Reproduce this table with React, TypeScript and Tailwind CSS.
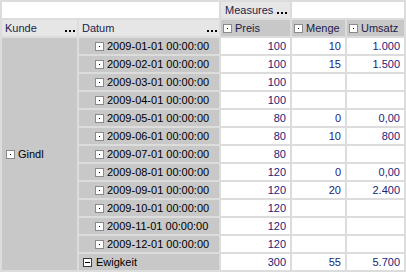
type Row = { datum: string; preis: string; menge: string; umsatz: string };

const rows: Row[] = [
  { datum: "2009-01-01 00:00:00", preis: "100", menge: "10", umsatz: "1.000" },
  { datum: "2009-02-01 00:00:00", preis: "100", menge: "15", umsatz: "1.500" },
  { datum: "2009-03-01 00:00:00", preis: "100", menge: "", umsatz: "" },
  { datum: "2009-04-01 00:00:00", preis: "100", menge: "", umsatz: "" },
  { datum: "2009-05-01 00:00:00", preis: "80", menge: "0", umsatz: "0,00" },
  { datum: "2009-06-01 00:00:00", preis: "80", menge: "10", umsatz: "800" },
  { datum: "2009-07-01 00:00:00", preis: "80", menge: "", umsatz: "" },
  { datum: "2009-08-01 00:00:00", preis: "120", menge: "0", umsatz: "0,00" },
  { datum: "2009-09-01 00:00:00", preis: "120", menge: "20", umsatz: "2.400" },
  { datum: "2009-10-01 00:00:00", preis: "120", menge: "", umsatz: "" },
  { datum: "2009-11-01 00:00:00", preis: "120", menge: "", umsatz: "" },
  { datum: "2009-12-01 00:00:00", preis: "120", menge: "", umsatz: "" },
];

function DotBox() {
  return (
    <span className="inline-flex w-[9px] h-[9px] border border-[#8a8a8a] bg-white items-center justify-center shrink-0">
      <span className="w-px h-px bg-black" />
    </span>
  );
}

function MinusBox() {
  return (
    <span className="inline-flex w-[9px] h-[9px] border border-[#3a3a3a] bg-white items-center justify-center shrink-0">
      <span className="w-[5px] h-px bg-black" />
    </span>
  );
}

// the "..." menu marker of a header: three 2px dots
function Dots() {
  return (
    <span className="flex items-end gap-[2px] h-[10px] pb-[1px]">
      <span className="w-[2px] h-[2px] bg-black" />
      <span className="w-[2px] h-[2px] bg-black" />
      <span className="w-[2px] h-[2px] bg-black" />
    </span>
  );
}

const cell = "h-4 p-0 align-middle";
const val = `${cell} bg-white text-right pr-1 text-[#1b237a]`;

export default function App() {
  return (
    <div
      className="w-[406px] h-[272px] bg-[#dcdcdc] text-[11px] leading-4 overflow-hidden"
      style={{ fontFamily: '"Liberation Sans", Arial, sans-serif' }}
    >
      <table className="table-fixed border-separate border-spacing-[2px]">
        <colgroup>
          <col className="w-[75px]" />
          <col className="w-[140px]" />
          <col className="w-[69px]" />
          <col className="w-[53px]" />
          <col className="w-[57px]" />
        </colgroup>
        <tbody>
          <tr>
            <td colSpan={2} className={`${cell} bg-white`} />
            <td className={`${cell} bg-[#e6e6e6] text-[#1c1c4a] pl-1`}>
              <div className="flex items-center gap-[4px]">
                <span>Measures</span>
                <Dots />
              </div>
            </td>
            <td colSpan={2} className={`${cell} bg-white`} />
          </tr>
          <tr>
            <td className={`${cell} bg-[#e6e6e6] text-[#1c1c4a] pl-[3px] pr-[2px]`}>
              <div className="flex items-center justify-between">
                <span>Kunde</span>
                <Dots />
              </div>
            </td>
            <td className={`${cell} bg-[#e6e6e6] text-[#1c1c4a] pl-[3px] pr-[2px]`}>
              <div className="flex items-center justify-between">
                <span>Datum</span>
                <Dots />
              </div>
            </td>
            {["Preis", "Menge", "Umsatz"].map((m) => (
              <td key={m} className={`${cell} bg-[#c8c8c8] text-[#1c1c4a] pl-[2px]`}>
                <div className="flex items-center gap-[3px]">
                  <DotBox />
                  <span>{m}</span>
                </div>
              </td>
            ))}
          </tr>
          {rows.map((r, i) => (
            <tr key={r.datum}>
              {i === 0 && (
                <td rowSpan={13} className="p-0 align-middle bg-[#c8c8c8] pl-1 text-black">
                  <div className="flex items-center gap-[3px]">
                    <DotBox />
                    <span>Gindl</span>
                  </div>
                </td>
              )}
              <td className={`${cell} bg-[#c8c8c8] text-black pl-4`}>
                <div className="flex items-center gap-[3px]">
                  <DotBox />
                  <span>{r.datum}</span>
                </div>
              </td>
              <td className={val}>{r.preis}</td>
              <td className={val}>{r.menge}</td>
              <td className={val}>{r.umsatz}</td>
            </tr>
          ))}
          <tr>
            <td className={`${cell} bg-[#c8c8c8] text-black pl-1`}>
              <div className="flex items-center gap-[4px]">
                <MinusBox />
                <span>Ewigkeit</span>
              </div>
            </td>
            <td className={val}>300</td>
            <td className={val}>55</td>
            <td className={val}>5.700</td>
          </tr>
        </tbody>
      </table>
    </div>
  );
}
